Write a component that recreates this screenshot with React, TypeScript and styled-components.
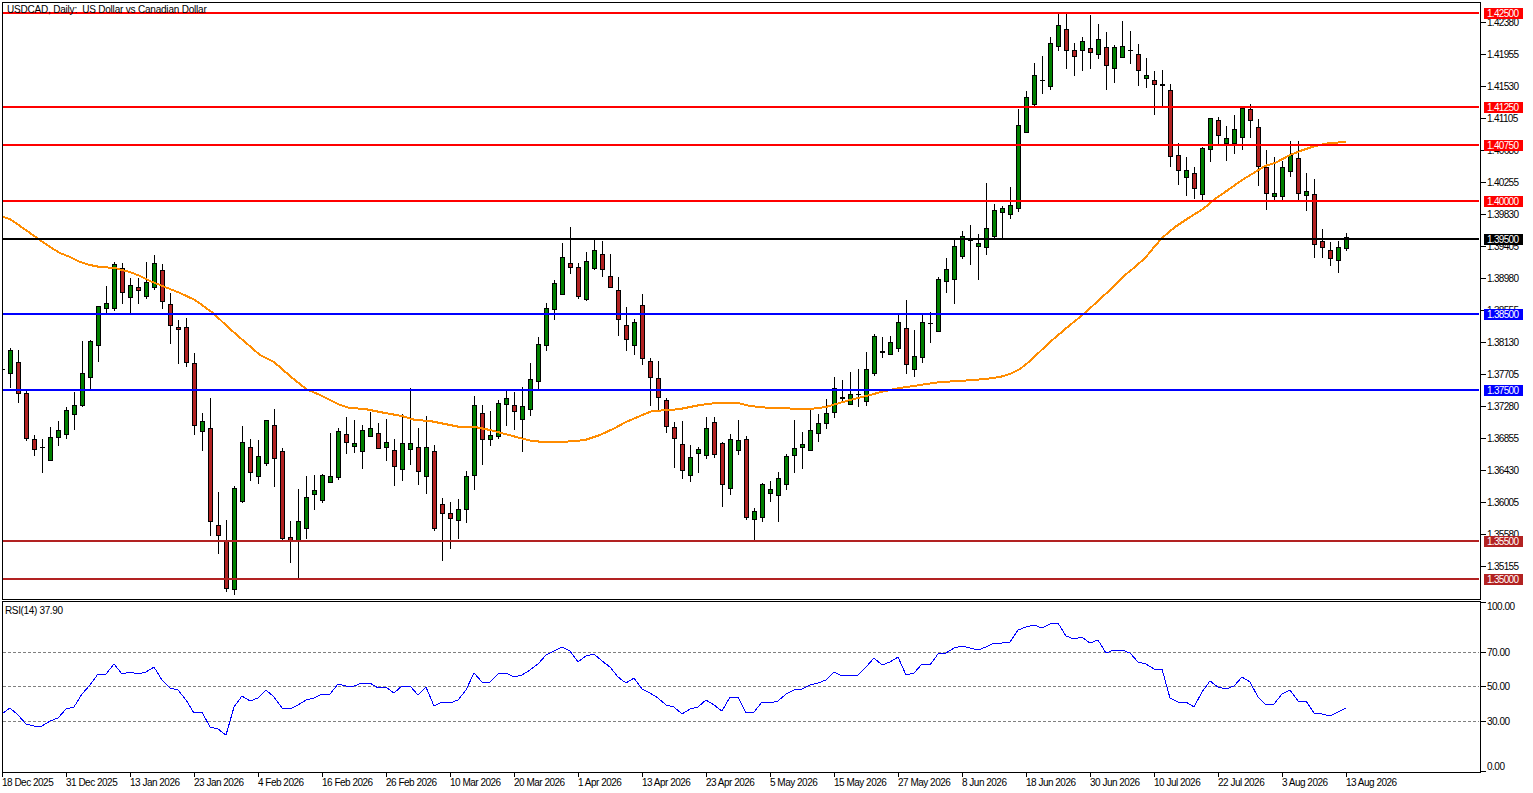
import React from 'react'
import styled, { createGlobalStyle } from 'styled-components'

// candles in page pixels: high, body top, body bottom, low, 1 = up
const candles: number[][] = [
  [369, 369, 369, 369, 1],
  [348, 350, 373, 387, 1], [350, 362, 393, 402, 0], [391, 393, 438, 440, 0], [435, 439, 449, 455, 0],
  [439, 447, 447, 472, 1], [427, 437, 460, 460, 1], [421, 430, 437, 445, 1], [407, 410, 434, 438, 1],
  [392, 405, 414, 429, 1], [341, 373, 405, 406, 1], [340, 341, 377, 389, 1], [306, 306, 345, 361, 1],
  [286, 303, 308, 313, 1], [262, 264, 308, 310, 1], [263, 268, 292, 303, 0], [278, 285, 297, 312, 1],
  [278, 287, 290, 303, 0], [262, 282, 296, 298, 1], [255, 263, 287, 289, 1], [264, 270, 301, 308, 0],
  [293, 304, 325, 343, 0], [320, 327, 329, 363, 0], [318, 327, 362, 366, 0], [353, 363, 425, 434, 0],
  [413, 421, 431, 450, 1], [398, 428, 521, 535, 0], [492, 525, 535, 553, 0], [520, 541, 588, 591, 0],
  [486, 488, 589, 594, 1], [426, 442, 501, 502, 1], [439, 447, 472, 480, 0], [440, 456, 476, 483, 1],
  [420, 420, 463, 465, 1], [409, 425, 458, 486, 0], [448, 451, 538, 540, 0], [521, 537, 540, 562, 0],
  [489, 521, 541, 577, 1], [476, 497, 528, 538, 1], [475, 490, 494, 509, 1], [474, 475, 500, 502, 1],
  [433, 476, 482, 482, 1], [428, 431, 477, 479, 1], [417, 434, 442, 453, 0], [420, 443, 446, 452, 1],
  [425, 430, 451, 468, 1], [412, 428, 436, 436, 1], [423, 433, 448, 448, 0], [419, 442, 447, 460, 1],
  [439, 450, 466, 485, 0], [414, 443, 469, 480, 1], [388, 443, 449, 464, 1], [428, 447, 471, 484, 0],
  [416, 447, 476, 493, 1], [445, 451, 528, 530, 0], [498, 504, 513, 560, 0], [502, 513, 518, 548, 0],
  [499, 509, 520, 538, 1], [471, 476, 509, 522, 1], [396, 405, 475, 489, 1], [405, 413, 439, 464, 0],
  [411, 435, 439, 445, 1], [400, 403, 436, 438, 1], [391, 398, 404, 425, 1], [392, 405, 411, 429, 0],
  [387, 406, 419, 451, 1], [363, 379, 409, 415, 1], [337, 344, 381, 390, 1], [303, 308, 345, 350, 1],
  [280, 283, 309, 319, 1], [243, 257, 294, 294, 1], [227, 263, 267, 273, 0], [263, 267, 296, 298, 0],
  [252, 261, 299, 300, 1], [239, 250, 268, 269, 1], [241, 254, 269, 276, 0], [254, 276, 287, 287, 0],
  [277, 290, 319, 335, 0], [307, 325, 339, 350, 0], [319, 322, 345, 354, 1], [294, 305, 358, 364, 0],
  [358, 361, 377, 405, 0], [361, 378, 397, 409, 0], [398, 400, 426, 432, 0], [422, 427, 438, 467, 0],
  [421, 444, 470, 478, 0], [445, 457, 475, 481, 1], [447, 449, 453, 472, 1], [417, 428, 455, 458, 1],
  [417, 422, 454, 457, 0], [442, 443, 484, 506, 0], [434, 439, 488, 494, 1], [420, 440, 450, 454, 1],
  [436, 439, 517, 519, 0], [508, 511, 519, 540, 1], [483, 484, 517, 521, 1], [481, 489, 493, 501, 1],
  [472, 478, 495, 521, 1], [454, 456, 484, 489, 1], [420, 448, 455, 472, 1], [432, 444, 447, 468, 1],
  [410, 430, 450, 450, 1], [414, 423, 433, 441, 1], [399, 413, 423, 428, 1], [377, 388, 412, 417, 1],
  [380, 397, 398, 401, 0], [372, 394, 404, 404, 1], [369, 394, 394, 406, 1], [352, 369, 401, 405, 1],
  [334, 336, 373, 375, 1], [337, 351, 352, 357, 1], [336, 342, 354, 354, 1], [314, 322, 348, 351, 1],
  [300, 328, 364, 373, 0], [330, 356, 369, 376, 1], [315, 322, 357, 362, 1], [312, 323, 323, 342, 1],
  [277, 279, 331, 331, 1], [258, 269, 281, 292, 1], [239, 246, 279, 303, 1], [231, 236, 256, 258, 1],
  [225, 239, 240, 264, 1], [234, 243, 246, 279, 1], [183, 228, 247, 254, 1], [204, 210, 236, 238, 1],
  [206, 208, 212, 238, 1], [187, 205, 214, 218, 1], [109, 125, 208, 211, 1], [91, 97, 132, 132, 1],
  [63, 75, 104, 106, 1], [56, 80, 80, 93, 1], [37, 43, 86, 89, 1], [14, 25, 46, 50, 1],
  [14, 29, 50, 68, 0], [43, 50, 56, 75, 0], [37, 41, 50, 70, 1], [15, 48, 52, 68, 0],
  [24, 39, 54, 58, 1], [32, 47, 65, 89, 0], [45, 47, 68, 82, 1], [21, 46, 57, 57, 1],
  [31, 50, 50, 63, 1], [44, 54, 70, 85, 0], [58, 75, 78, 87, 1], [71, 80, 84, 114, 0],
  [70, 84, 85, 106, 1], [84, 90, 156, 166, 0], [143, 155, 170, 184, 0], [157, 170, 177, 195, 1],
  [167, 173, 188, 198, 0], [147, 148, 194, 200, 1], [118, 118, 149, 161, 1], [117, 120, 135, 144, 0],
  [126, 138, 143, 160, 1], [115, 129, 143, 153, 1], [107, 108, 137, 149, 1], [104, 109, 120, 137, 0],
  [119, 127, 166, 185, 0], [150, 167, 193, 209, 0], [157, 193, 196, 200, 1], [161, 167, 196, 199, 1],
  [141, 155, 171, 176, 1], [141, 158, 193, 199, 0], [173, 191, 195, 210, 1], [179, 194, 244, 257, 0],
  [229, 241, 247, 257, 0], [242, 250, 258, 265, 0], [241, 247, 260, 272, 1], [233, 237, 248, 250, 1],
]

// 50 day average, hand traced
const ma = [
  [3, 217], [10, 219], [20, 226], [30, 233], [40, 240], [50, 247], [60, 253], [70, 257], [80, 262], [90, 265],
  [100, 267], [115, 268], [122, 270], [130, 272], [140, 276], [150, 281], [160, 285], [170, 289], [180, 293],
  [195, 300], [213, 313], [230, 329], [245, 342], [260, 355], [274, 362], [290, 376], [306, 389], [320, 395],
  [340, 405], [350, 408], [365, 409], [385, 413], [402, 416], [415, 420], [430, 421], [445, 424], [460, 427],
  [475, 427], [490, 430], [505, 434], [520, 438], [532, 441], [545, 442], [562, 442], [575, 441], [585, 440],
  [600, 435], [615, 428], [626, 422], [640, 416], [652, 411], [670, 410], [680, 409], [690, 407], [700, 405],
  [716, 403], [738, 403], [750, 406], [770, 408], [810, 409], [826, 407], [836, 404], [850, 400], [866, 396],
  [885, 391], [900, 388], [920, 385], [940, 382], [960, 381], [985, 379], [1000, 377], [1010, 374], [1020, 369],
  [1030, 361], [1050, 342], [1070, 325], [1085, 313], [1100, 299], [1111, 289], [1125, 275], [1135, 267],
  [1146, 257], [1155, 246], [1162, 238], [1175, 227], [1190, 217], [1203, 209], [1215, 199], [1228, 190],
  [1242, 180], [1252, 174], [1265, 166], [1275, 163], [1290, 155], [1303, 150], [1315, 146], [1330, 143], [1346, 142],
]

const levels = [
  { y: 13, label: '1.42500', color: '#ff0000' },
  { y: 107, label: '1.41250', color: '#ff0000' },
  { y: 145, label: '1.40750', color: '#ff0000' },
  { y: 201, label: '1.40000', color: '#ff0000' },
  { y: 239, label: '1.39500', color: '#000000' },
  { y: 314, label: '1.38500', color: '#0000ff' },
  { y: 390, label: '1.37500', color: '#0000ff' },
  { y: 541, label: '1.35500', color: '#b22222' },
  { y: 579, label: '1.35000', color: '#b22222' },
]

const prices = [
  '1.42380', '1.41955', '1.41530', '1.41105', '1.40680', '1.40255', '1.39830', '1.39405', '1.38980',
  '1.38555', '1.38130', '1.37705', '1.37280', '1.36855', '1.36430', '1.36005', '1.35580', '1.35155',
]

// rsi, page y is 595 + v / 3
const rsi = [
  358, 340, 360, 387, 394, 392, 378, 370, 342, 337, 298, 270, 238, 238, 208, 238, 232, 237, 232, 217, 254, 280,
  285, 315, 355, 352, 396, 402, 421, 335, 304, 319, 310, 286, 305, 340, 343, 330, 314, 308, 298, 298, 268, 274,
  274, 265, 265, 280, 277, 295, 274, 274, 300, 277, 333, 322, 325, 316, 285, 235, 262, 260, 238, 235, 246, 241,
  226, 207, 180, 168, 157, 168, 201, 183, 177, 198, 215, 246, 265, 250, 282, 295, 308, 330, 335, 357, 343, 335,
  314, 330, 348, 307, 307, 354, 350, 322, 325, 317, 296, 286, 283, 271, 263, 254, 232, 244, 241, 241, 216, 190,
  211, 202, 187, 241, 235, 208, 211, 177, 174, 160, 154, 160, 166, 157, 145, 145, 142, 105, 97, 91, 100, 88, 85,
  124, 132, 127, 145, 135, 175, 166, 166, 175, 201, 206, 222, 222, 308, 322, 322, 337, 291, 259, 276, 281, 272,
  247, 262, 305, 331, 328, 298, 286, 319, 319, 355, 357, 364, 351, 340,
]

const rsiLevels = [652, 686, 721]

const rsiTicks = [
  { y: 602, labelY: 606, label: '100.00' },
  { y: 652, labelY: 652, label: '70.00' },
  { y: 686, labelY: 686, label: '50.00' },
  { y: 721, labelY: 721, label: '30.00' },
  { y: 771, labelY: 766, label: '0.00' },
]

const dates = [
  '18 Dec 2025', '31 Dec 2025', '13 Jan 2026', '23 Jan 2026', '4 Feb 2026', '16 Feb 2026', '26 Feb 2026', '10 Mar 2026',
  '20 Mar 2026', '1 Apr 2026', '13 Apr 2026', '23 Apr 2026', '5 May 2026', '15 May 2026', '27 May 2026', '8 Jun 2026',
  '18 Jun 2026', '30 Jun 2026', '10 Jul 2026', '22 Jul 2026', '3 Aug 2026', '13 Aug 2026',
]

const Candles: React.FC = () => (
  <g>
    {candles.map(([hi, top, bot, lo, up], i) => {
      const x = 2 + i * 8
      return (
        <g key={i}>
          <Wick x1={x + 0.5} x2={x + 0.5} y1={hi} y2={lo + 1} />
          {bot - top < 1 ? (
            <Wick x1={x - 2} x2={x + 3} y1={top + 0.5} y2={top + 0.5} />
          ) : (
            <Body $up={up === 1} x={x - 1.5} y={top + 0.5} width={4} height={bot - top} />
          )}
        </g>
      )
    })}
  </g>
)

const App: React.FC = () => (
  <Terminal>
    <GlobalStyle />
    <PaneRow>
      <MainPane>
        <Title>USDCAD, Daily:&nbsp; US Dollar vs Canadian Dollar</Title>
        <PlotSvg width={1476} height={596} viewBox="3 3 1476 596">
          <Candles />
          <MaLine points={ma.map((p) => p.join(',')).join(' ')} />
          {levels.map((l) => (
            <LevelLine key={l.y} x1={3} x2={1479} y1={l.y} y2={l.y} stroke={l.color} />
          ))}
        </PlotSvg>
      </MainPane>
      <PriceAxis>
        {prices.map((p) => (
          <TickRow key={p}>
            <TickMark />
            <TickLabel>{p}</TickLabel>
          </TickRow>
        ))}
        {levels.map((l) => (
          <LevelTag key={l.y} $y={l.y} $color={l.color}>
            {l.label}
          </LevelTag>
        ))}
      </PriceAxis>
    </PaneRow>
    <RsiRow>
      <RsiPane>
        <RsiTitle>RSI(14) 37.90</RsiTitle>
        <PlotSvg width={1476} height={170} viewBox="3 602 1476 170">
          {rsiLevels.map((y) => (
            <DashLine key={y} x1={3} x2={1479} y1={y + 0.5} y2={y + 0.5} />
          ))}
          <RsiLine points={rsi.map((v, i) => `${2 + i * 8},${Math.round(595 + v / 3)}`).join(' ')} />
        </PlotSvg>
      </RsiPane>
      <RsiAxis>
        {rsiTicks.map((t) => (
          <React.Fragment key={t.label}>
            <RsiMark $y={t.y} />
            <RsiLabel $y={t.labelY}>{t.label}</RsiLabel>
          </React.Fragment>
        ))}
      </RsiAxis>
    </RsiRow>
    <TimeAxis>
      {dates.map((d) => (
        <TimeCell key={d}>
          <TimeMark />
          <TimeLabel>{d}</TimeLabel>
        </TimeCell>
      ))}
    </TimeAxis>
  </Terminal>
)

const GlobalStyle = createGlobalStyle`
  html, body {
    margin: 0;
    background: #fff;
  }
`

const Terminal = styled.div`
  width: 1533px;
  height: 793px;
  box-sizing: border-box;
  padding: 2px 0 0 2px;
  overflow: hidden;
  background: #fff;
  color: #000;
  font-family: "Liberation Sans", Arial, sans-serif;
  font-size: 10px;
  letter-spacing: -0.5px;
`

const PaneRow = styled.div`
  display: flex;
  height: 598px;
`

const MainPane = styled.div`
  position: relative;
  width: 1479px;
  height: 598px;
  box-sizing: border-box;
  border: 1px solid #000;
  overflow: hidden;
`

const PlotSvg = styled.svg`
  display: block;
`

const Title = styled.div`
  position: absolute;
  top: 1px;
  left: 4px;
  line-height: 12px;
  letter-spacing: -0.2px;
  white-space: nowrap;
`

const Wick = styled.line`
  stroke: #000;
  stroke-width: 1;
  shape-rendering: crispEdges;
`

const Body = styled.rect<{ $up: boolean }>`
  fill: ${(p) => (p.$up ? '#008000' : '#b22222')};
  stroke: #000;
  stroke-width: 1;
  shape-rendering: crispEdges;
`

const MaLine = styled.polyline`
  fill: none;
  stroke: #ff8c00;
  stroke-width: 2;
  shape-rendering: crispEdges;
`

const LevelLine = styled.line`
  stroke-width: 2;
  shape-rendering: crispEdges;
`

const PriceAxis = styled.div`
  position: relative;
  flex: 1;
  padding-top: 4px;
  letter-spacing: -0.7px;
`

const TickRow = styled.div`
  display: flex;
  align-items: center;
  height: 32.06px;
`

const TickMark = styled.span`
  width: 5px;
  height: 1px;
  margin-right: 1px;
  background: #000;
`

const TickLabel = styled.span`
  line-height: 11px;
`

const LevelTag = styled.div<{ $y: number; $color: string }>`
  position: absolute;
  top: ${(p) => p.$y - 7}px;
  left: 3px;
  width: 39px;
  height: 11px;
  box-sizing: border-box;
  padding-left: 3px;
  line-height: 11px;
  color: #fff;
  background: ${(p) => p.$color};
`

const RsiRow = styled.div`
  display: flex;
  height: 172px;
  margin-top: 1px;
`

const RsiPane = styled(MainPane)`
  height: 172px;
`

const RsiTitle = styled.div`
  position: absolute;
  top: 3px;
  left: 2px;
  line-height: 12px;
  letter-spacing: -0.35px;
  white-space: nowrap;
`

const DashLine = styled.line`
  stroke: #808080;
  stroke-width: 1;
  stroke-dasharray: 3 2;
  shape-rendering: crispEdges;
`

const RsiLine = styled.polyline`
  fill: none;
  stroke: #0000ff;
  stroke-width: 1;
  shape-rendering: crispEdges;
`

const RsiAxis = styled.div`
  position: relative;
  flex: 1;
`

const RsiMark = styled.div<{ $y: number }>`
  position: absolute;
  top: ${(p) => p.$y - 601}px;
  left: 0;
  width: 5px;
  height: 1px;
  background: #000;
`

const RsiLabel = styled.div<{ $y: number }>`
  position: absolute;
  top: ${(p) => p.$y - 601 - 5}px;
  left: 6px;
  line-height: 11px;
`

const TimeAxis = styled.div`
  display: flex;
`

const TimeCell = styled.div`
  display: flex;
  flex-direction: column;
  flex: 0 0 64px;
  white-space: nowrap;
`

const TimeMark = styled.span`
  width: 1px;
  height: 4px;
  background: #000;
`

const TimeLabel = styled.span`
  line-height: 12px;
`

export default App
